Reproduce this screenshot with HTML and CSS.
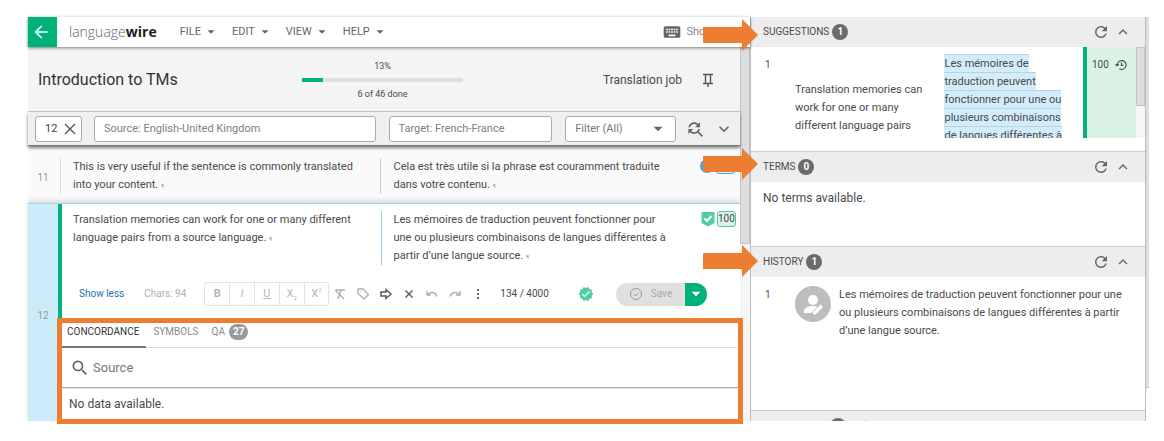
FILE: index.html
```html
<!DOCTYPE html>
<html lang="en">
<head>
    <meta charset="UTF-8">
    <meta name="viewport" content="width=device-width, initial-scale=1.0">
    <title>LanguageWire - Introduction to TMs</title>
    <link rel="stylesheet" href="styles.css">
</head>
<body>
    <!-- shared icons -->
    <svg class="sprite" width="0" height="0" aria-hidden="true">
        <symbol id="refresh" viewBox="0 0 24 24"><path d="M17.65,6.35C16.2,4.9 14.21,4 12,4A8,8 0 0,0 4,12A8,8 0 0,0 12,20C15.73,20 18.84,17.45 19.73,14H17.65C16.83,16.33 14.61,18 12,18A6,6 0 0,1 6,12A6,6 0 0,1 12,6C13.66,6 15.14,6.69 16.22,7.78L13,11H20V4L17.65,6.35Z"/></symbol>
        <symbol id="up" viewBox="0 0 24 24"><path d="M7.41,15.41L12,10.83L16.59,15.41L18,14L12,8L6,14L7.41,15.41Z"/></symbol>
        <symbol id="down" viewBox="0 0 24 24"><path d="M7.41,8.58L12,13.17L16.59,8.58L18,10L12,16L6,10L7.41,8.58Z"/></symbol>
        <symbol id="caret" viewBox="0 0 24 24"><path d="M6,9L12,15L18,9H6Z"/></symbol>
        <symbol id="arrow" viewBox="0 0 55 32"><path d="M0,8H39V0L55,16L39,32V24H0Z"/></symbol>
    </svg>

    <div class="app">
        <main class="editor">
            <header class="topbar">
                <button class="back" aria-label="Back"><svg class="icon-20" viewBox="0 0 24 24"><path d="M20,11V13H8L13.5,18.5L12.08,19.92L4.16,12L12.08,4.08L13.5,5.5L8,11H20Z"/></svg></button>
                <a class="logo" href="#">language<b>wire</b></a>
                <nav class="menu">
                    <button>FILE <svg><use href="#caret"/></svg></button>
                    <button>EDIT <svg><use href="#caret"/></svg></button>
                    <button>VIEW <svg><use href="#caret"/></svg></button>
                    <button>HELP <svg><use href="#caret"/></svg></button>
                </nav>
                <button class="shortcuts"><svg class="icon-20" viewBox="0 0 24 24"><path d="M19,10H17V8H19M19,13H17V11H19M16,10H14V8H16M16,13H14V11H16M16,17H8V15H16M7,10H5V8H7M7,13H5V11H7M8,11H10V13H8M8,8H10V10H8M11,11H13V13H11M11,8H13V10H11M20,5H4C2.89,5 2,5.89 2,7V17A2,2 0 0,0 4,19H20A2,2 0 0,0 22,17V7C22,5.89 21.1,5 20,5Z"/></svg>Shortcuts</button>
            </header>

            <div class="workspace">
                <div class="content">
                    <div class="jobbar">
                        <h1>Introduction to TMs</h1>
                        <div class="progress">
                            <span>13%</span>
                            <div class="track"><div class="fill" style="width: 13%"></div></div>
                            <span>6 of 46 done</span>
                        </div>
                        <span class="jobtype">Translation job</span>
                        <button class="pin" aria-label="Pin"><svg class="icon-16" viewBox="0 0 16 16"><path class="line" d="M3,2.5H13M5.5,2.5V11M10.5,2.5V11M3,11.5H13M8,12V15"/></svg></button>
                    </div>

                    <div class="filters">
                        <div class="field id-field">
                            <input type="text" value="12" aria-label="Segment number">
                            <button aria-label="Clear"><svg class="icon-14" viewBox="0 0 14 14"><path class="line" d="M2,2L12,12M12,2L2,12"/></svg></button>
                        </div>
                        <input class="field source-field" type="text" placeholder="Source: English-United Kingdom" aria-label="Source">
                        <input class="field target-field" type="text" placeholder="Target: French-France" aria-label="Target">
                        <div class="select">
                            <select class="field" aria-label="Filter"><option>Filter (All)</option></select>
                            <svg class="icon-18"><use href="#caret"/></svg>
                        </div>
                        <button class="replace" aria-label="Find and replace"><svg class="icon-20" viewBox="0 0 24 24"><path d="M11,6C12.38,6 13.63,6.56 14.54,7.46L12,10H18V4L15.95,6.05C14.68,4.78 12.93,4 11,4C7.47,4 4.57,6.61 4.08,10H6.1C6.56,7.72 8.58,6 11,6M16.64,15.14C17.3,14.24 17.76,13.17 17.92,12H15.9C15.44,14.28 13.42,16 11,16C9.62,16 8.37,15.44 7.46,14.54L10,12H4V18L6.05,15.95C7.32,17.22 9.07,18 11,18C12.55,18 14,17.5 15.14,16.64L20,21.5L21.5,20L16.64,15.14Z"/></svg></button>
                        <button aria-label="More filters"><svg class="icon-20"><use href="#down"/></svg></button>
                    </div>

                    <section class="segment">
                        <div class="number">11</div>
                        <div class="body">
                            <div class="pair">
                                <p>This is very useful if the sentence is commonly translated into your content. <i>¶</i></p>
                                <p class="target">Cela est très utile si la phrase est couramment traduite dans votre contenu. <i>¶</i></p>
                                <div class="state">
                                    <svg class="icon-16" viewBox="0 0 16 16"><circle class="blue" cx="8" cy="8" r="7"/></svg>
                                    <span class="match blue-match">100</span>
                                </div>
                            </div>
                        </div>
                    </section>

                    <section class="segment active">
                        <div class="number">12</div>
                        <div class="body">
                            <div class="pair">
                                <p>Translation memories can work for one or many different language pairs from a source language. <i>¶</i></p>
                                <p class="target">Les mémoires de traduction peuvent fonctionner pour une ou plusieurs combinaisons de langues différentes à partir d’une langue source. <i>¶</i></p>
                                <div class="state">
                                    <svg class="icon-16" viewBox="0 0 16 16"><path class="mint" d="M1.500,1H14.500V12L8,15.500L1.500,12Z"/><path class="check" d="M4.500,7.500L7,10L11.500,5"/></svg>
                                    <span class="match">100</span>
                                </div>
                            </div>

                            <div class="toolbar">
                                <button class="less">Show less</button>
                                <span class="chars">Chars: 94</span>
                                <div class="format">
                                    <button><b>B</b></button>
                                    <button><em>I</em></button>
                                    <button><u>U</u></button>
                                    <button>X<sub>2</sub></button>
                                    <button>X<sup>2</sup></button>
                                </div>
                                <div class="tools">
                                    <button class="off" aria-label="Clear formatting"><svg class="icon-14" viewBox="0 0 14 14"><path class="line" d="M3,3H12M8,3L5,12M2,3L11,12"/></svg></button>
                                    <button class="off" aria-label="Tag"><svg class="icon-14" viewBox="0 0 14 14"><path class="line" d="M2,2H7L12.500,7.500L8,12L2,6.500ZM4.500,4.200V5"/></svg></button>
                                    <button aria-label="Copy source"><svg class="icon-14" viewBox="0 0 14 14"><path class="line" d="M2,5H7V2.500L12,7L7,11.500V9H2Z"/></svg></button>
                                    <button aria-label="Clear target"><svg class="icon-14" viewBox="0 0 14 14"><path class="line" d="M3.500,3.500L10.500,10.500M10.500,3.500L3.500,10.500"/></svg></button>
                                    <button class="off" aria-label="Undo"><svg class="icon-14" viewBox="0 0 14 14"><path class="line" d="M2,4V8H6M2,8C5,4.500 10,4.500 12,9.500"/></svg></button>
                                    <button class="off" aria-label="Redo"><svg class="icon-14" viewBox="0 0 14 14"><path class="line" d="M12,4V8H8M12,8C9,4.500 4,4.500 2,9.500"/></svg></button>
                                    <button aria-label="More"><svg class="icon-14" viewBox="0 0 14 14"><path d="M6,2H8V4H6ZM6,6H8V8H6ZM6,10H8V12H6Z"/></svg></button>
                                </div>
                                <span class="count">134 / 4000</span>
                                <svg class="icon-16 mint" viewBox="0 0 24 24"><path d="M23,12L20.56,9.22L20.9,5.54L17.29,4.72L15.4,1.54L12,3L8.6,1.54L6.71,4.72L3.1,5.53L3.44,9.21L1,12L3.44,14.78L3.1,18.47L6.71,19.29L8.6,22.47L12,21L15.4,22.46L17.29,19.28L20.9,18.46L20.56,14.78L23,12M10,17L6,13L7.41,11.59L10,14.17L16.59,7.58L18,9L10,17Z"/></svg>
                                <div class="save">
                                    <button class="save-main" disabled><svg class="icon-14" viewBox="0 0 14 14"><circle class="line" cx="7" cy="7" r="5.500"/><path class="line" d="M4.500,7L6.500,9L10,5.500"/></svg>Save</button>
                                    <button class="save-menu" aria-label="Save options"><svg class="icon-18"><use href="#caret"/></svg></button>
                                </div>
                            </div>

                            <div class="panel">
                                <div class="tabs">
                                    <button class="selected">CONCORDANCE</button>
                                    <button>SYMBOLS</button>
                                    <button>QA <span class="pill">27</span></button>
                                </div>
                                <label class="search">
                                    <svg class="icon-20" viewBox="0 0 24 24"><path d="M9.5,3A6.5,6.5 0 0,1 16,9.5C16,11.11 15.41,12.59 14.44,13.73L14.71,14H15.5L20.5,19L19,20.5L14,15.5V14.71L13.73,14.44C12.59,15.41 11.11,16 9.5,16A6.5,6.5 0 0,1 3,9.5A6.5,6.5 0 0,1 9.5,3M9.5,5C7,5 5,7 5,9.5C5,12 7,14 9.5,14C12,14 14,12 14,9.5C14,7 12,5 9.5,5Z"/></svg>
                                    <input type="text" placeholder="Source" aria-label="Search source">
                                </label>
                                <p class="empty">No data available.</p>
                            </div>
                        </div>
                    </section>
                </div>
                <div class="scrollbar"><div class="thumb"></div></div>
            </div>
        </main>

        <aside class="side">
            <div class="sections">
                <section>
                    <header class="section-head">
                        <h2>SUGGESTIONS</h2><span class="badge">1</span>
                        <button aria-label="Refresh"><svg class="icon-18"><use href="#refresh"/></svg></button>
                        <button aria-label="Collapse"><svg class="icon-18"><use href="#up"/></svg></button>
                    </header>
                    <div class="suggestions">
                        <span class="index">1</span>
                        <p class="from">Translation memories can work for one or many different language pairs</p>
                        <p class="to"><mark>Les mémoires de traduction peuvent fonctionner pour une ou plusieurs combinaisons de langues différentes à</mark></p>
                        <div class="score">100 <svg class="icon-12" viewBox="0 0 14 14"><path class="line" d="M2.500,7A5.200,5.200 0 1 1 5,11.500M.5,6L2.500,8L4.500,6M7.500,4V7.500H10"/></svg></div>
                        <div class="scrollbar"><div class="thumb"></div></div>
                    </div>
                </section>
                <section>
                    <header class="section-head">
                        <h2>TERMS</h2><span class="badge">0</span>
                        <button aria-label="Refresh"><svg class="icon-18"><use href="#refresh"/></svg></button>
                        <button aria-label="Collapse"><svg class="icon-18"><use href="#up"/></svg></button>
                    </header>
                    <p class="terms">No terms available.</p>
                </section>
                <section>
                    <header class="section-head">
                        <h2>HISTORY</h2><span class="badge">1</span>
                        <button aria-label="Refresh"><svg class="icon-18"><use href="#refresh"/></svg></button>
                        <button aria-label="Collapse"><svg class="icon-18"><use href="#up"/></svg></button>
                    </header>
                    <div class="history">
                        <span class="index">1</span>
                        <svg class="avatar" viewBox="0 0 36 36"><circle cx="18" cy="18" r="18"/><circle class="white" cx="18" cy="14" r="5"/><path class="white" d="M9,27V25C9,21.500 14,20 18,20C19.500,20 21,20.200 22.200,20.700L16,27Z"/><path class="white" d="M18,28V26L25.500,18.500L28,21L20.500,28.500H18Z"/></svg>
                        <p>Les mémoires de traduction peuvent fonctionner pour une ou plusieurs combinaisons de langues différentes à partir d’une langue source.</p>
                    </div>
                </section>
                <section class="cut">
                    <span class="badge"></span>
                    <svg class="warning" viewBox="0 0 16 16"><path d="M8,0L16,15H0Z"/></svg>
                </section>
            </div>
            <div class="page-scroll"></div>
        </aside>

        <svg class="pointer pointer-suggestions"><use href="#arrow"/></svg>
        <svg class="pointer pointer-terms"><use href="#arrow"/></svg>
        <svg class="pointer pointer-history"><use href="#arrow"/></svg>
    </div>
</body>
</html>
```
FILE: styles.css
```css
* {
    box-sizing: border-box;
}
body {
    margin: 0;
    padding: 17px 15px 17px 28px;
    background-color: white;
    color: #4a4a4a;
    font-family: Roboto, Arial, sans-serif;
    font-size: 11px;
    line-height: 18px;
}
h1, h2, p {
    margin: 0;
    font-weight: normal;
}
button, input, select {
    font: inherit;
    color: inherit;
    background: none;
    border: none;
    padding: 0;
    margin: 0;
}
button {
    display: flex;
    align-items: center;
    justify-content: center;
    cursor: pointer;
}
svg {
    display: block;
    flex: none;
    fill: #666;
}
.sprite {
    position: absolute;
}
.line {
    fill: none;
    stroke: #555;
    stroke-width: 1.4;
}
.icon-12 { width: 12px; height: 12px; }
.icon-14 { width: 14px; height: 14px; }
.icon-16 { width: 16px; height: 16px; }
.icon-18 { width: 18px; height: 18px; }
.icon-20 { width: 20px; height: 20px; }
.blue { fill: #42a5e8; }
.mint { fill: #4fcda6; }
.white { fill: white; }
.check {
    fill: none;
    stroke: white;
    stroke-width: 2;
}
.app {
    position: relative;
    display: grid;
    grid-template-columns: minmax(0, 722fr) minmax(0, 399fr);
}
.editor {
    display: flex;
    flex-direction: column;
}

/* top bar */
.topbar {
    position: relative;
    z-index: 1;
    display: flex;
    align-items: center;
    height: 30px;
    background-color: white;
    box-shadow: 0 1px 3px rgba(0,0,0,0.5);
}
.back {
    width: 29px;
    height: 30px;
    padding-right: 4px;
    background-color: #00b27a;
}
.back svg {
    fill: white;
}
.logo {
    margin-left: 12px;
    color: #666;
    font-family: "Open Sans", sans-serif;
    font-size: 14px;
    font-weight: 300;
    text-decoration: none;
}
.logo b {
    color: #1d1d1b;
    font-weight: 700;
}
.menu {
    display: flex;
    gap: 14px;
    margin-left: 23px;
    color: #666;
}
.menu svg {
    width: 14px;
    height: 14px;
    margin-left: 3px;
}
.shortcuts {
    margin-left: auto;
    padding-right: 16px;
    gap: 4px;
    color: #888;
}

/* job info */
.workspace {
    flex: 1;
    display: flex;
    align-items: stretch;
}
.content {
    flex: 1;
    min-width: 0;
}
.jobbar {
    display: flex;
    align-items: center;
    height: 65px;
    padding: 2px 24px 0 10px;
    background-color: #f4f4f4;
    border-bottom: 1px solid #c4c4c4;
}
h1 {
    width: 264px;
    color: #333;
    font-size: 16px;
}
.progress {
    width: 161px;
    text-align: center;
    font-size: 9px;
}
.progress span {
    display: block;
    line-height: 16px;
}
.track {
    height: 4px;
    margin: 4px 0;
    background-color: #dedede;
}
.fill {
    height: 4px;
    background-color: #00b27a;
}
.jobtype {
    margin-left: auto;
    font-size: 12px;
}
.pin {
    margin-left: 18px;
}

/* filters */
.filters {
    position: relative;
    z-index: 1;
    display: flex;
    align-items: center;
    height: 34px;
    padding: 0 6px 0 7px;
    background-color: #f0f0f0;
    border-bottom: 1px solid #777;
    box-shadow: 0 2px 3px rgba(0,0,0,0.5);
}
.field {
    height: 26px;
    padding: 0 9px;
    border: 1px solid #aaa;
    border-radius: 3px;
    background-color: white;
    color: #777;
}
.field::placeholder {
    color: #808080;
    opacity: 1;
}
.id-field {
    display: flex;
    align-items: center;
    width: 47px;
    padding: 0 4px 0 9px;
    color: #444;
}
.id-field input {
    flex: 1;
    min-width: 0;
}
.source-field {
    flex: 1 1 282px;
    min-width: 0;
    margin-left: 12px;
}
.target-field {
    flex: 1 1 164px;
    min-width: 0;
    margin: 0 13px;
}
.select {
    position: relative;
    width: 111px;
}
.select select {
    display: block;
    width: 100%;
    appearance: none;
}
.select svg {
    position: absolute;
    top: 4px;
    right: 9px;
    pointer-events: none;
}
.replace {
    margin: 0 9px;
}

/* segments */
.segment {
    display: flex;
    background-color: #fafafa;
}
.number {
    display: flex;
    align-items: center;
    justify-content: center;
    width: 30px;
    padding-top: 6px;
    color: #999;
    font-size: 10px;
}
.body {
    flex: 1;
    min-width: 0;
    padding: 12px 3px 9px 2px;
}
.pair {
    display: grid;
    grid-template-columns: 320fr 319fr 38px;
    border-left: 1px solid #ddd;
}
.pair p {
    padding: 0 20px 0 12px;
}
.pair .target {
    padding-right: 28px;
    border-left: 1px solid #ccc;
}
.pair i {
    color: #aaa;
    font-size: 6px;
    font-style: normal;
    line-height: 6px;
}
.state {
    display: flex;
    align-items: flex-start;
    gap: 1px;
}
.match {
    height: 16px;
    border: 1px solid #4fcda6;
    border-radius: 3px;
    background-color: #dcf1e5;
    font-size: 10px;
    line-height: 14px;
}
.blue-match {
    border-color: #42a5e8;
    background-color: #e3f2fc;
}
.active {
    background-color: white;
    border-top: 1px solid #9fd4ea;
    box-shadow: 0 -2px 5px rgba(0,0,0,0.15);
}
.active .number {
    background-color: #cbebf9;
}
.active .body {
    padding: 7px 2px 2px 0;
    border-left: 4px solid #00b27a;
}
.active .pair {
    border-left: none;
}
.active .pair p {
    padding-left: 11px;
}
.active .pair .target {
    border-color: #9ccce2;
}

/* segment toolbar */
.toolbar {
    display: flex;
    align-items: center;
    height: 24px;
    margin: 17px 31px 17px 17px;
    font-size: 10px;
}
.less {
    color: #1b75b8;
}
.chars {
    margin-left: 20px;
    color: #b0b0b0;
}
.format {
    display: flex;
    width: 125px;
    margin-left: 18px;
    border: 1px solid #e4e4e4;
    border-radius: 3px;
    color: #b5b5b5;
    font-size: 11px;
}
.format button {
    flex: 1;
    height: 22px;
    border-right: 1px solid #e4e4e4;
}
.format button:last-child {
    border-right: none;
}
.format sub, .format sup {
    font-size: 6px;
    line-height: 6px;
}
.format sub {
    align-self: flex-end;
    padding-bottom: 4px;
}
.format sup {
    align-self: flex-start;
    padding-top: 4px;
}
.tools {
    display: flex;
    gap: 9px;
    margin-left: 4px;
}
.off .line {
    stroke: #b0b0b0;
}
.count {
    margin: 0 auto 0 15px;
}
.save {
    display: flex;
    height: 23px;
    margin-left: 22px;
}
.save-main {
    gap: 8px;
    width: 69px;
    border-radius: 12px 0 0 12px;
    background-color: #e0e0e0;
    color: #aaa;
}
.save-main .line {
    stroke: #999;
    stroke-width: 1;
}
.save-menu {
    width: 22px;
    border-radius: 0 12px 12px 0;
    background-color: #00b27a;
}
.save-menu svg {
    fill: white;
}

/* concordance panel */
.panel {
    position: relative;
    z-index: 2;
    outline: 5px solid #ed7d31;
    background-color: white;
}
.tabs {
    display: flex;
    gap: 13px;
    height: 25px;
    border-bottom: 1px solid #ddd;
    font-size: 10px;
}
.tabs button {
    padding-bottom: 7px;
    color: #888;
}
.tabs .selected {
    padding: 0 7px 6px 5px;
    margin-bottom: -1px;
    margin-right: -6px;
    border-bottom: 2px solid #777;
    color: #333;
}
.pill {
    margin-left: 4px;
    padding: 0 4px;
    border-radius: 8px;
    background-color: #999;
    color: white;
    font-weight: bold;
    line-height: 16px;
}
.search {
    display: flex;
    align-items: center;
    gap: 3px;
    height: 40px;
    padding: 0 8px;
    border-bottom: 1px solid #aaa;
    box-shadow: 0 1px 1px rgba(0,0,0,0.1);
    font-size: 13px;
}
.search input {
    flex: 1;
    min-width: 0;
}
.search input::placeholder {
    color: #777;
    opacity: 1;
}
.empty {
    padding: 7px 7px 6px;
    font-size: 12px;
}

/* scrollbars */
.scrollbar {
    width: 10px;
    background-color: #f6f6f6;
}
.thumb {
    border: 1px solid #c4c4c4;
    background-color: #dedede;
}
.workspace .thumb {
    height: 197px;
}

/* side panels */
.side {
    display: flex;
    height: 404px;
}
.sections {
    flex: 1;
    min-width: 0;
    overflow: hidden;
    border-left: 1px solid #bbb;
    border-right: 1px solid #bbb;
}
.section-head {
    display: flex;
    align-items: center;
    height: 31px;
    padding: 0 13px 0 12px;
    border-top: 1px solid #ccc;
    background-color: #ededed;
}
section:first-child .section-head {
    height: 30px;
    border-top: none;
}
h2 {
    font-size: 10px;
}
.badge {
    width: 16px;
    height: 16px;
    margin: 0 auto 0 3px;
    border-radius: 8px;
    background-color: #6b6b6b;
    color: white;
    font-size: 10px;
    font-weight: bold;
    line-height: 16px;
    text-align: center;
}
.section-head button {
    margin-left: 4px;
}
.suggestions {
    display: grid;
    grid-template-columns: 44px 150fr 139fr 53px 9px;
    height: 91px;
    margin-bottom: 13px;
    overflow: hidden;
}
.index {
    flex: none;
    padding: 9px 0 0 14px;
    font-size: 10px;
}
.from {
    padding: 34px 10px 0 0;
}
.to {
    padding: 8px 10px 0 0;
}
mark {
    background-color: #d3ecfb;
    border-top: 1px solid #b9d3e2;
    color: inherit;
    padding: 2px 0;
}
.score {
    display: flex;
    gap: 6px;
    padding: 9px 0 0 5px;
    border-left: 4px solid #00b27a;
    background-color: #dcf1e5;
    font-size: 10px;
}
.score svg {
    margin-top: 3px;
}
.suggestions .thumb {
    height: 59px;
}
.suggestions .scrollbar {
    width: 9px;
}
.terms {
    height: 64px;
    padding: 7px 12px;
    font-size: 12px;
}
.history {
    display: flex;
    height: 133px;
    padding-top: 9px;
}
.history .index {
    width: 44px;
    padding-top: 0;
}
.avatar {
    width: 36px;
    height: 36px;
    fill: #bdbdbd;
}
.history p {
    padding: 0 12px 0 8px;
}
.cut {
    display: flex;
    gap: 14px;
    height: 31px;
    padding: 7px 79px;
    border-top: 1px solid #ccc;
    background-color: #ededed;
}
.cut .badge {
    margin: 0;
}
.warning {
    width: 12px;
    height: 16px;
    fill: #ed7d31;
}
.page-scroll {
    width: 3px;
    height: 371px;
    background-color: #dedede;
    border-bottom: 1px solid #bbb;
}

/* callout arrows */
.pointer {
    position: absolute;
    z-index: 3;
    right: 391px;
    width: 55px;
    height: 32px;
    fill: #ed7d31;
}
.pointer-suggestions {
    top: 2px;
}
.pointer-terms {
    top: 131px;
}
.pointer-history {
    top: 228px;
}
```
